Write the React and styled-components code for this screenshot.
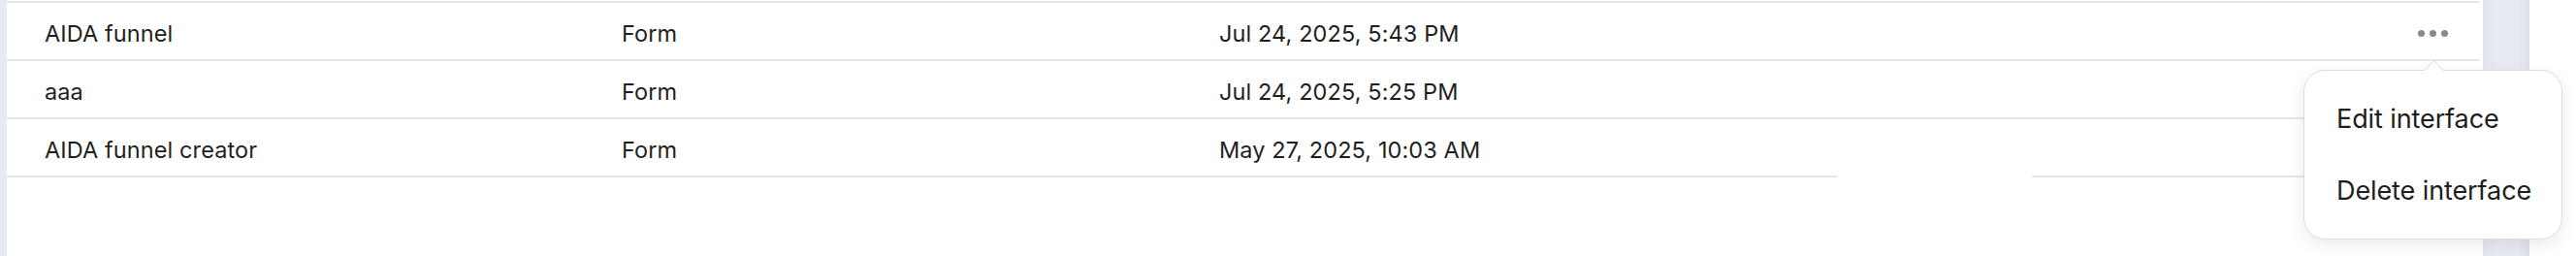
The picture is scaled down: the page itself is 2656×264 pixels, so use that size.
import React from 'react';
import styled, { createGlobalStyle } from 'styled-components';

const GlobalStyle = createGlobalStyle`
  html, body {
    margin: 0;
    padding: 0;
    background: #ffffff;
  }
  body {
    font-family: 'Inter', 'Noto Sans', sans-serif;
    color: #1f1f1f;
    -webkit-font-smoothing: antialiased;
  }
`;

const Page = styled.div`
  position: relative;
  display: flex;
  width: 2656px;
  height: 264px;
  overflow: hidden;
  background: #fff;
`;

const Gutter = styled.div`
  width: 7px;
  flex: none;
  background: #e6eaf2;
`;

const Main = styled.div`
  position: relative;
  flex: 1;
  padding: 1px 3px 0 0;
  background: #fff;
`;

const ScrollStrip = styled.div`
  width: 48px;
  flex: none;
  background: linear-gradient(90deg, #e2e6ee 0%, #e8ebf2 35%, #e7eaf1 75%, #dce0e9 100%);
`;

const Blank = styled.div`
  width: 48px;
  flex: none;
  background: #fff;
`;

const Table = styled.div`
  border-top: 2px solid #e6e6e6;
`;

const Row = styled.div`
  display: grid;
  grid-template-columns: 595px 616px 1fr auto;
  align-items: center;
  height: 58px;
  padding: 0 33px 0 39px;
  border-bottom: 2px solid #e6e6e6;
  font-size: 23.5px;
  letter-spacing: 0.1px;
`;

const Cell = styled.div`
  padding-top: 5px;
  white-space: nowrap;
`;

const MoreButton = styled.button`
  display: flex;
  gap: 5px;
  align-items: center;
  padding: 4px 0 0;
  border: 0;
  background: none;
  cursor: pointer;

  span {
    width: 7px;
    height: 7px;
    border-radius: 50%;
    background: #8a8a8a;
  }
`;

const LineMask = styled.div`
  position: absolute;
  top: 178px;
  left: 1894px;
  width: 201px;
  height: 8px;
  background: #fff;
`;

const Popover = styled.div`
  position: absolute;
  top: 72px;
  left: 2375px;
  width: 267px;
  box-sizing: border-box;
  padding: 14px 0 11px;
  background: #fff;
  border: 1px solid #dcdcdc;
  border-radius: 22px;
  box-shadow: 0 6px 18px rgba(0, 0, 0, 0.08);

  &::before {
    content: '';
    position: absolute;
    top: -8px;
    left: 126px;
    width: 14px;
    height: 14px;
    background: #fff;
    border-top: 1px solid #dcdcdc;
    border-left: 1px solid #dcdcdc;
    transform: rotate(45deg);
  }
`;

const MenuItem = styled.div`
  display: flex;
  align-items: center;
  height: 70px;
  padding: 0 0 4px 33px;
  font-size: 27px;
  letter-spacing: -0.1px;
  color: #1e1e1e;
  cursor: pointer;
`;

const rows = [
  { name: 'AIDA funnel', type: 'Form', date: 'Jul 24, 2025, 5:43 PM', menu: true },
  { name: 'aaa', type: 'Form', date: 'Jul 24, 2025, 5:25 PM' },
  { name: 'AIDA funnel creator', type: 'Form', date: 'May 27, 2025, 10:03 AM' },
];

export default function App() {
  return (
    <>
      <GlobalStyle />
      <Page>
        <Gutter />
        <Main>
          <Table>
            {rows.map((r) => (
              <Row key={r.name}>
                <Cell>{r.name}</Cell>
                <Cell>{r.type}</Cell>
                <Cell>{r.date}</Cell>
                <MoreButton aria-label="More" style={{ visibility: r.menu ? 'visible' : 'hidden' }}>
                  <span />
                  <span />
                  <span />
                </MoreButton>
              </Row>
            ))}
          </Table>
        </Main>
        <ScrollStrip />
        <Blank />
        <LineMask />
        <Popover>
          <MenuItem>Edit interface</MenuItem>
          <MenuItem>Delete interface</MenuItem>
        </Popover>
      </Page>
    </>
  );
}
